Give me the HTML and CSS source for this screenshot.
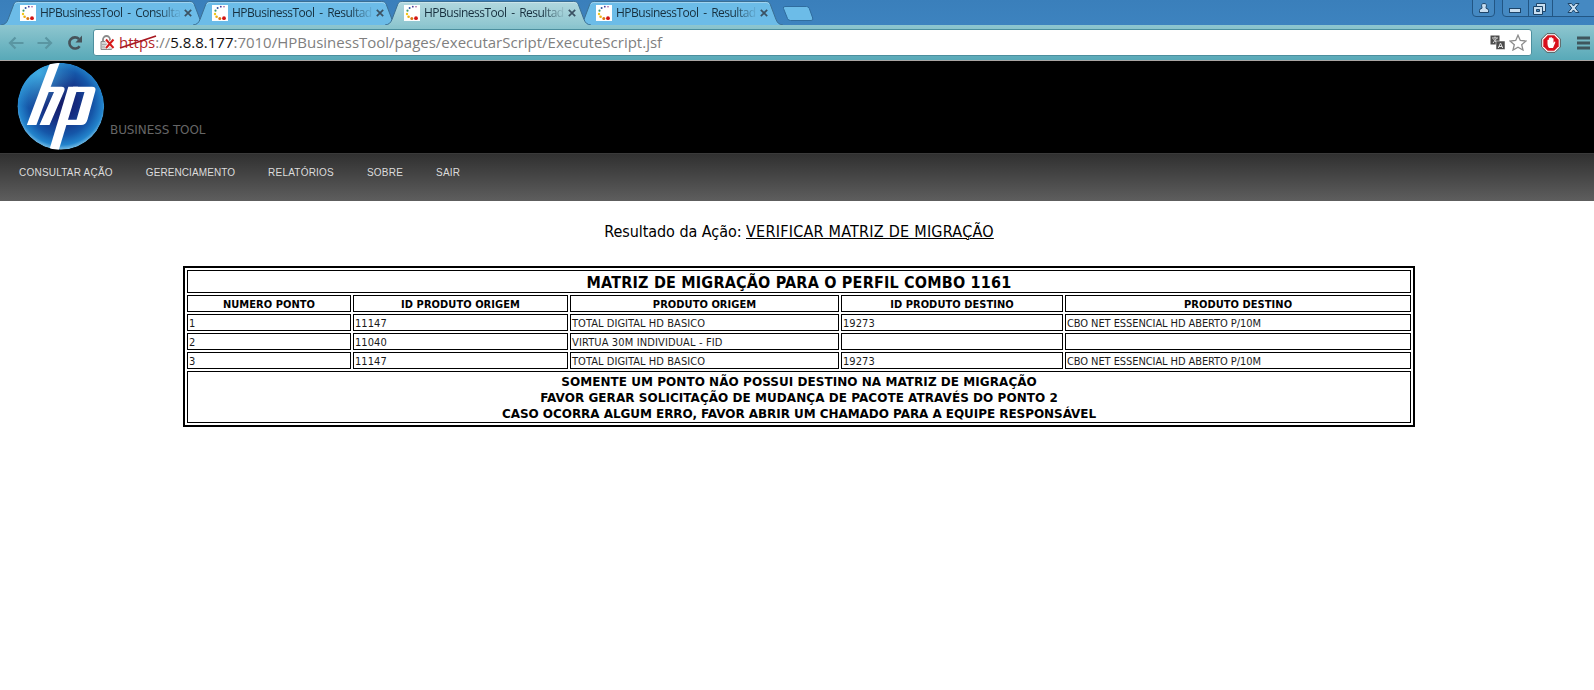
FILE: index.html
```html
<!DOCTYPE html>
<html lang="pt-BR">
<head>
<meta charset="utf-8">
<title>HPBusinessTool - Resultado</title>
<link rel="stylesheet" href="styles.css">
</head>
<body>
<svg class="defs" width="0" height="0" aria-hidden="true">
  <symbol id="favicon" viewBox="0 0 16 16">
    <rect width="16" height="16" fill="#fff"/>
    <circle cx="12" cy="1.800" r=".8" fill="#a04a90"/><circle cx="8.800" cy="1.700" r=".9" fill="#4a3a98"/>
    <circle cx="5.600" cy="3" r="1" fill="#2e54a0"/><circle cx="3.500" cy="5.700" r="1.100" fill="#3c9a70"/>
    <circle cx="3" cy="9" r="1.200" fill="#f0c818"/><circle cx="4.600" cy="11.800" r="1.300" fill="#eeb010"/>
    <circle cx="7.800" cy="13.400" r="1.500" fill="#d87818"/><circle cx="12" cy="13.200" r="1.900" fill="#d41414"/>
  </symbol>
  <symbol id="close" viewBox="0 0 8 8"><path d="M.8 .8l6.400 6.400M7.200 .8l-6.400 6.400" stroke="#3b5263" stroke-width="1.700"/></symbol>
  <symbol id="tab" viewBox="0 0 206 25">
    <path d="M0 25C4 24.500 5.500 23 7 19.500L12.500 5C13.700 2 15 1.500 17.500 1.500H188.500C191 1.500 192.300 2 193.500 5L199 19.500C200.500 23 202 24.500 206 25" stroke="#3a6f94"/>
    <path d="M13.500 4.500C14.300 3 15.500 2.500 17.500 2.500H188.500C190.500 2.500 191.700 3 192.500 4.500" fill="none" stroke="#fff" stroke-opacity=".35"/>
  </symbol>
  <linearGradient id="activeFill" x2="0" y2="1"><stop offset="0" stop-color="#b2d8df"/><stop offset="1" stop-color="#90c7d0"/></linearGradient>
</svg>

<header class="browser">
  <div class="tabstrip">
    <div class="tabs">
      <div class="tab"><svg class="tab-shape"><use href="#tab"/></svg><svg class="fav"><use href="#favicon"/></svg><span class="tab-title">HPBusinessTool - Consulta</span><svg class="x"><use href="#close"/></svg></div>
      <div class="tab"><svg class="tab-shape"><use href="#tab"/></svg><svg class="fav"><use href="#favicon"/></svg><span class="tab-title">HPBusinessTool - Resultad</span><svg class="x"><use href="#close"/></svg></div>
      <div class="tab active"><svg class="tab-shape"><use href="#tab"/></svg><svg class="fav"><use href="#favicon"/></svg><span class="tab-title">HPBusinessTool - Resultad</span><svg class="x"><use href="#close"/></svg></div>
      <div class="tab"><svg class="tab-shape"><use href="#tab"/></svg><svg class="fav"><use href="#favicon"/></svg><span class="tab-title">HPBusinessTool - Resultad</span><svg class="x"><use href="#close"/></svg></div>
    </div>
    <svg class="newtab" viewBox="0 0 32 16"><path d="M3 .5H24.500Q26.500 .5 27.300 2.500L30.700 12Q31.500 14.500 29 14.500H8.500Q6.300 14.500 5.500 12.500L1.500 2.500Q.8 .5 3 .5Z" fill="#6cbce8" stroke="#2f6c9e"/></svg>
    <svg class="winctl" viewBox="0 0 124 18">
      <g fill="#4589c2" stroke="#225684"><path d="M2.500-1V13Q2.500 16.500 6 16.500H21Q24.500 16.500 24.500 13V-1"/><path d="M32.500-1V13Q32.500 16.500 36 16.500H125V-1"/><path d="M58.500 0V16.500M82.500 0V16.500"/></g>
      <g fill="#c8def0" stroke="#1d4468"><path d="M9.500 12.500V10.500Q9.500 8.500 12 8.200V7.500Q10.500 3.500 14 3.500Q17.500 3.500 16 7.500V8.200Q18.500 8.500 18.500 10.500V12.500Z"/><rect x="39.500" y="8.500" width="11" height="4"/>
      <path d="M66.500 3.500H75.500V11.500H66.500Z"/><path d="M63.500 6.500H72.500V14.500H63.500Z"/><path d="M66.500 9.500H69.500V11.500H66.500Z" fill="#4589c2"/>
      <path d="M98 3.500H101.500L103.500 6L105.500 3.500H109L105.300 8L109 12.500H105.500L103.500 10L101.500 12.500H98L101.700 8Z"/></g>
    </svg>
  </div>
  <div class="toolbar">
    <svg class="arrow" viewBox="0 0 16 14"><path d="M15.500 7H2.500M7.500 1.500L2 7l5.500 5.500" fill="none" stroke="#5a96a2" stroke-width="2.200"/></svg>
    <svg class="arrow" viewBox="0 0 16 14"><path d="M.5 7H13.500M8.500 1.500L14 7l-5.500 5.500" fill="none" stroke="#5a96a2" stroke-width="2.200"/></svg>
    <svg class="reload" viewBox="0 0 16 16"><path d="M12.600 11.200A5.600 5.600 0 1 1 12 4" fill="none" stroke="#46535a" stroke-width="2.600"/><path d="M15 .5V7.500H8.500Z" fill="#46535a"/></svg>
    <div class="omnibox">
      <svg class="lock" viewBox="0 0 16 16"><path d="M3 7V4.500a3.500 3.500 0 0 1 7 0V7" fill="none" stroke="#8a8a8a" stroke-width="1.800"/><path d="M1 6.500H11.500V14.500H1Z" fill="#d4d4d4" stroke="#8a8a8a"/><path d="M2 9.500H7M2 12H7" stroke="#aaa"/><path d="M6 4.500L13.500 13M13.500 4.500L6 13" stroke="#fff" stroke-width="3.500"/><path d="M6 4.500L13.500 13M13.500 4.500L6 13" stroke="#d51a1a" stroke-width="2"/></svg>
      <span class="url"><span class="bad">https<svg class="strike" viewBox="0 0 38 14"><path d="M1 13L37 1" stroke="#a81820" stroke-width="1.800"/></svg></span>://<b>5.8.8.177</b>:7010/HPBusinessTool/pages/executarScript/ExecuteScript.jsf</span>
      <svg class="translate" viewBox="0 0 15 15"><rect x=".5" y=".5" width="9" height="9" fill="#4c4c4c"/><path d="M2 3H8M5 1.500V3M3 8L6.500 3.500M3.500 4L7 8" stroke="#ddd" fill="none"/><rect x="6" y="6" width="9" height="8.500" fill="#4c4c4c" stroke="#fff" stroke-width=".5"/><path d="M8.300 13L10.500 8L12.700 13M9 11.500H12" stroke="#ddd" fill="none"/></svg>
      <svg class="star" viewBox="0 0 18 17"><path d="M9 1.200L11.300 6.400L17 7L12.700 10.700L14 16L9 13.200L4 16L5.300 10.700L1 7L6.700 6.400Z" fill="#fff" stroke="#8c8c8c" stroke-width="1.300"/></svg>
    </div>
    <svg class="adblock" viewBox="0 0 20 20"><path d="M6 .7H14L19.300 6V14L14 19.300H6L.7 14V6Z" fill="#fff" stroke="#555" stroke-width="1"/><path d="M6.700 2.300H13.300L17.700 6.700V13.300L13.300 17.700H6.700L2.300 13.300V6.700Z" fill="#d8101c"/><path d="M6.500 11V7Q7.200 6 7.900 7V5Q8.700 4 9.300 5V4.500Q10.100 3.500 10.900 4.500V5.500Q11.800 4.500 12.500 5.700V10L13.500 8.500Q14.800 8.500 14.200 9.800L12 15H8Q6.500 13.500 6.500 11Z" fill="#fff"/></svg>
    <svg class="menu" viewBox="0 0 13 14"><path d="M0 2H13M0 7H13M0 12H13" stroke="#3f565d" stroke-width="2.800"/></svg>
  </div>
</header>

<section class="banner">
  <svg class="logo" viewBox="0 0 88 88">
    <defs>
      <radialGradient id="ball" cx=".5" cy=".46" r=".54"><stop offset="0" stop-color="#141c68"/><stop offset=".35" stop-color="#152c80"/><stop offset=".7" stop-color="#1556a8"/><stop offset=".9" stop-color="#2384cc"/><stop offset="1" stop-color="#7cc0e6"/></radialGradient>
      <radialGradient id="glow" cx=".25" cy=".12" r=".42"><stop offset="0" stop-color="#4cc0ee" stop-opacity=".75"/><stop offset="1" stop-color="#4cc0ee" stop-opacity="0"/></radialGradient>
      <clipPath id="round"><circle cx="43.800" cy="43.300" r="43.400"/></clipPath>
    </defs>
    <g clip-path="url(#round)">
      <circle cx="43.800" cy="43.300" r="43.400" fill="url(#ball)"/><circle cx="43.800" cy="43" r="43" fill="url(#glow)"/>
      <g fill="#fff">
        <path d="M33.400-1H43L19.400 62H9.800Z"/>
        <path d="M32 23.700H44.500Q48.600 23.700 47.300 27.800L32.500 62H22.500L37 29H30Z"/>
        <path d="M51.300 23.700H61L41.500 88H32Z"/>
        <path d="M56 23.700H75Q79.500 23.700 78.300 28L70.500 56.500Q69 62 64 62H44L45.500 56.800H59.500L67.500 29H56Z"/>
      </g>
    </g>
  </svg>
  <span class="brand">BUSINESS TOOL</span>
</section>

<nav class="nav"><a>CONSULTAR AÇÃO</a><a class="flat">GERENCIAMENTO</a><a>RELATÓRIOS</a><a>SOBRE</a><a>SAIR</a></nav>

<main>
  <h1>Resultado da Ação: <u>VERIFICAR MATRIZ DE MIGRAÇÃO</u></h1>
  <table>
    <colgroup><col class="c1"><col class="c2"><col class="c3"><col class="c4"><col class="c5"></colgroup>
    <tr class="caption"><th colspan="5">MATRIZ DE MIGRAÇÃO PARA O PERFIL COMBO 1161</th></tr>
    <tr class="head"><th>NUMERO PONTO</th><th>ID PRODUTO ORIGEM</th><th>PRODUTO ORIGEM</th><th>ID PRODUTO DESTINO</th><th>PRODUTO DESTINO</th></tr>
    <tr><td>1</td><td>11147</td><td>TOTAL DIGITAL HD BASICO</td><td>19273</td><td class="tight">CBO NET ESSENCIAL HD ABERTO P/10M</td></tr>
    <tr><td>2</td><td>11040</td><td class="wide">VIRTUA 30M INDIVIDUAL - FID</td><td></td><td></td></tr>
    <tr><td>3</td><td>11147</td><td>TOTAL DIGITAL HD BASICO</td><td>19273</td><td class="tight">CBO NET ESSENCIAL HD ABERTO P/10M</td></tr>
    <tr class="note"><th colspan="5">SOMENTE UM PONTO NÃO POSSUI DESTINO NA MATRIZ DE MIGRAÇÃO<br>FAVOR GERAR SOLICITAÇÃO DE MUDANÇA DE PACOTE ATRAVÉS DO PONTO 2<br><span class="last">CASO OCORRA ALGUM ERRO, FAVOR ABRIR UM CHAMADO PARA A EQUIPE RESPONSÁVEL</span></th></tr>
  </table>
</main>
</body>
</html>
```
FILE: styles.css
```css
* { box-sizing: border-box; }
body { margin: 0; background: #fff; color: #000; font-family: "DejaVu Sans Condensed", "DejaVu Sans", sans-serif; font-stretch: condensed; overflow: hidden; }
svg { display: block; flex: none; }
.defs { position: absolute; }

/* browser chrome */
.browser { height: 61px; background: linear-gradient(#3a7fbb, #3d83bf 24px); border-bottom: 1px solid #aaa6a4; font-family: "Open Sans", "Noto Sans", sans-serif; font-stretch: normal; }
.tabstrip { height: 25px; display: flex; align-items: flex-start; }
.tabs { display: flex; }
.tab { position: relative; width: 192px; height: 25px; padding: 5px 0 0 20px; display: flex; }
.tab-shape { position: absolute; left: 1px; top: 0; width: 206px; height: 25px; fill: #6cbce8; }
.tab.active { z-index: 1; }
.tab.active .tab-shape { fill: url(#activeFill); }
.fav { position: relative; width: 16px; height: 16px; }
.tab-title { position: relative; width: 144px; margin-left: 4px; white-space: nowrap; font-size: 12px; line-height: 16px; letter-spacing: -.5px; word-spacing: 2px; color: #17303f; -webkit-mask: linear-gradient(90deg, #000 118px, transparent 142px); mask: linear-gradient(90deg, #000 118px, transparent 142px); }
.x { position: relative; width: 8px; height: 8px; margin: 4px 0 0 1px; }
.newtab { width: 32px; height: 16px; margin: 6px 0 0 14px; }
.winctl { width: 124px; height: 18px; margin-left: auto; }
.toolbar { height: 35px; display: flex; align-items: center; background: linear-gradient(#8ec6cf, #58a9b8); padding-left: 8px; }
.arrow { width: 16px; height: 14px; margin-right: 13px; }
.reload { width: 16px; height: 16px; margin-left: 1px; }
.omnibox { width: 1439px; height: 27px; margin-left: 10px; display: flex; align-items: center; background: #fff; border: 1px solid #4c8f9e; border-radius: 3px; padding: 0 4px 0 6px; }
.lock { width: 16px; height: 16px; }
.url { margin-left: 3px; font-size: 15px; line-height: 25px; color: #7f7f7f; white-space: nowrap; }
.url b { font-weight: 400; color: #111; }
.bad { position: relative; color: #b21f28; }
.strike { position: absolute; left: 0; top: 3px; width: 38px; height: 14px; }
.translate { width: 15px; height: 15px; margin-left: auto; }
.star { width: 18px; height: 17px; margin-left: 4px; }
.adblock { width: 20px; height: 20px; margin-left: 9px; }
.menu { width: 13px; height: 14px; margin-left: 16px; }

/* page header */
.banner { height: 92px; background: #000; display: flex; align-items: flex-start; padding: 2px 0 0 17px; }
.logo { width: 88px; height: 88px; }
.brand { margin: 59px 0 0 5px; font-family: "DejaVu Sans", sans-serif; font-stretch: normal; font-size: 12px; line-height: 16px; letter-spacing: -.1px; color: #666; white-space: nowrap; }
.nav { height: 48px; padding: 12px 0 0 19px; display: flex; gap: 33px; background: linear-gradient(#303030, #5e5e5e); border-top: 1px solid #3a3a3a; font: 10px/14px "Liberation Sans", Arial, sans-serif; letter-spacing: .22px; color: #dcdcdc; }
.nav a { white-space: nowrap; }
.nav .flat { letter-spacing: .08px; }

/* result */
main { padding-top: 21px; }
h1 { margin: 0; font-size: 16px; line-height: 20px; font-weight: 400; text-align: center; padding-left: 4px; letter-spacing: -.05px; }
u { letter-spacing: .24px; text-underline-offset: 1px; text-decoration-thickness: 1px; }
table { table-layout: fixed; width: 1232px; margin: 24px 0 0 183px; border: 2px solid #000; border-spacing: 2px; font-size: 11px; letter-spacing: .05px; }
.c1 { width: 164px; } .c2 { width: 215px; } .c3 { width: 269px; } .c4 { width: 222px; } .c5 { width: 346px; }
td, th { height: 17px; padding: 2px 1px 0; border: 1px solid #000; line-height: 13px; white-space: nowrap; }
td { color: #1a1a1a; }
td.tight { letter-spacing: -.08px; }
td.wide { letter-spacing: .13px; }
.caption th { height: 23px; padding-top: 1px; font-size: 16px; line-height: 19px; letter-spacing: .2px; }
.note th { height: 52px; font-family: "DejaVu Sans", sans-serif; font-stretch: normal; font-size: 12px; line-height: 16px; }
.note .last { letter-spacing: -.05px; }
```
